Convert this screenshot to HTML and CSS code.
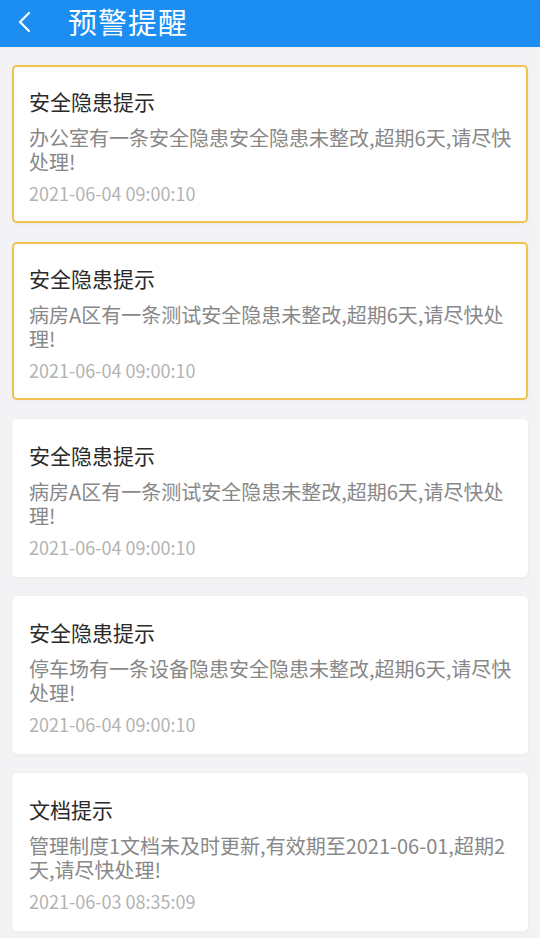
FILE: index.html
```html
<!DOCTYPE html>
<html lang="zh-CN">
<head>
<meta charset="utf-8">
<title>预警提醒</title>
<link rel="stylesheet" href="styles.css">
</head>
<body>
<header class="topbar">
  <svg class="back" width="20" height="24" viewBox="0 0 20 24"><path d="M14 3 L5 12 L14 21" fill="none" stroke="#fff" stroke-width="2.2" stroke-linecap="round" stroke-linejoin="round"/></svg>
  <h1 class="title">预警提醒</h1>
</header>
<main class="list">
  <div class="card card-hl">
    <div class="card-title">安全隐患提示</div>
    <div class="card-body">办公室有一条安全隐患安全隐患未整改,超期6天,请尽快处理!</div>
    <div class="card-date">2021-06-04 09:00:10</div>
  </div>
  <div class="card card-hl">
    <div class="card-title">安全隐患提示</div>
    <div class="card-body">病房A区有一条测试安全隐患未整改,超期6天,请尽快处理!</div>
    <div class="card-date">2021-06-04 09:00:10</div>
  </div>
  <div class="card">
    <div class="card-title">安全隐患提示</div>
    <div class="card-body">病房A区有一条测试安全隐患未整改,超期6天,请尽快处理!</div>
    <div class="card-date">2021-06-04 09:00:10</div>
  </div>
  <div class="card">
    <div class="card-title">安全隐患提示</div>
    <div class="card-body">停车场有一条设备隐患安全隐患未整改,超期6天,请尽快处理!</div>
    <div class="card-date">2021-06-04 09:00:10</div>
  </div>
  <div class="card">
    <div class="card-title">文档提示</div>
    <div class="card-body">管理制度1文档未及时更新,有效期至2021-06-01,超期2天,请尽快处理!</div>
    <div class="card-date">2021-06-03 08:35:09</div>
  </div>
</main>
</body>
</html>
```
FILE: styles.css
```css
* { box-sizing: border-box; }
html, body { margin: 0; padding: 0; }
body {
  background: #f3f3f5;
  font-family: "Noto Sans CJK SC", "Noto Sans", sans-serif;
  width: 540px;
  height: 938px;
  overflow: hidden;
}
.topbar {
  height: 47px;
  background: #1c8ef2;
  display: flex;
  align-items: center;
  padding-left: 15px;
}
.back { display: block; margin-top: -4px; }
.title {
  margin: -5px 0 0 33px;
  font-size: 29px;
  font-weight: 400;
  color: #fff;
  line-height: 36px;
  letter-spacing: 1px;
}
.list {
  display: flex;
  flex-direction: column;
  gap: 19px;
  padding: 18px 12px 0 12px;
}
.card {
  background: #fff;
  border: 2px solid transparent;
  border-radius: 5px;
  padding: 20px 10px 15px 15px;
  height: 158px;
  box-shadow: 0 1px 4px rgba(0,0,0,0.04);
}
.card-hl {
  border-color: #efc24b;
}
.card-title {
  font-size: 21px;
  line-height: 28px;
  color: #2a2a2a;
}
.card-body {
  margin-top: 11px;
  font-size: 20px;
  line-height: 24px;
  color: #888;
}
.card-date {
  margin-top: 7px;
  font-size: 18px;
  line-height: 24px;
  color: #b3b3b3;
}
```
